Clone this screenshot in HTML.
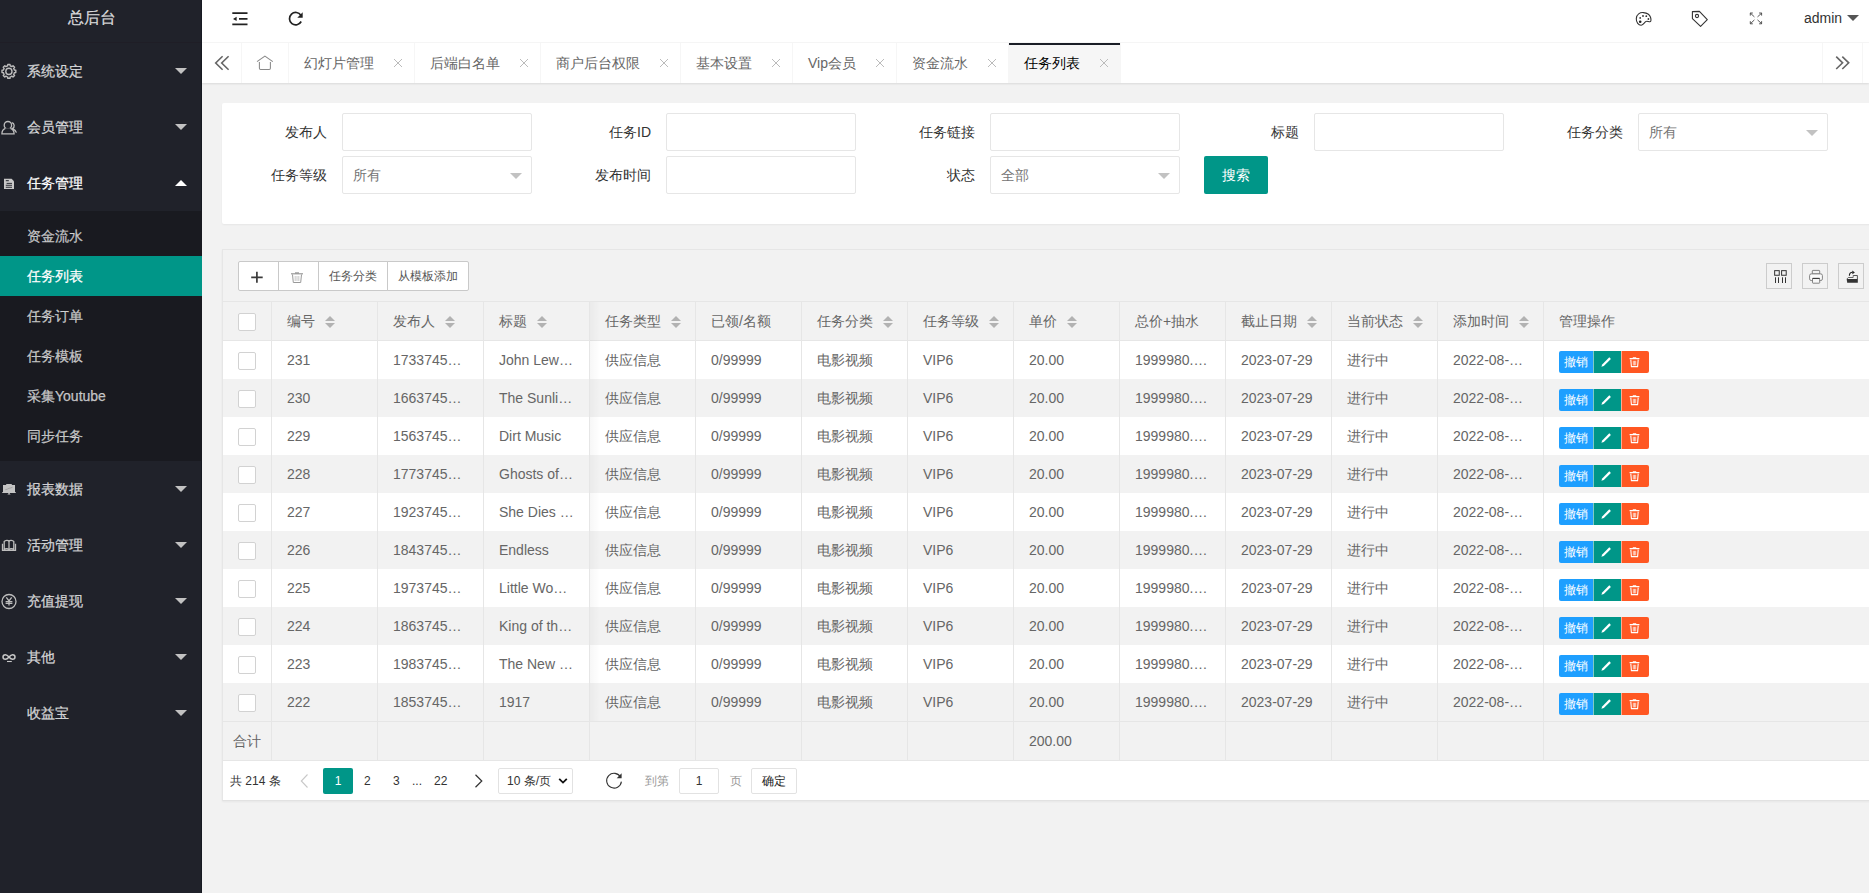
<!DOCTYPE html>
<html><head><meta charset="utf-8"><title>总后台</title>
<style>
*{margin:0;padding:0;box-sizing:border-box}
html,body{width:1869px;height:893px;overflow:hidden;background:#f2f2f2;font-family:"Liberation Sans",sans-serif;font-size:14px;color:#333}
.abs{position:absolute}
#side{position:absolute;left:0;top:0;width:202px;height:893px;background:#20222a;border-right:1px solid #171a22}
#logo{position:absolute;left:-18px;top:0;width:219px;height:43px;line-height:36px;-webkit-text-stroke:0.2px currentColor;text-align:center;color:rgba(255,255,255,.8);font-size:16px;background:#20222a;border-bottom:1px solid #1f1e26}
.nav{position:absolute;left:0;width:201px;height:56px;line-height:56px;color:rgba(255,255,255,.75);font-size:14px}
.nav .t{position:absolute;left:27px;top:0;-webkit-text-stroke:0.25px currentColor}
.nav .ic{position:absolute;left:1px;top:20px;width:16px;height:16px}
.nav .ar{position:absolute;left:175px;top:25px;width:0;height:0;border-left:6px solid transparent;border-right:6px solid transparent;border-top:6px solid #c2c2c2}
.nav .ar.up{border-top:0;border-bottom:6px solid #fff;top:25px}
#child{position:absolute;left:0;top:211px;width:202px;height:250px;background:#191a20}
.ch{position:absolute;left:0;width:202px;height:40px;line-height:40px;padding-left:27px;color:rgba(255,255,255,.7);-webkit-text-stroke:0.25px currentColor}
.ch.on{background:#009688;color:#fff}
#head{position:absolute;left:202px;top:0;width:1667px;height:43px;background:#fff;border-bottom:1px solid #f6f6f6}
#tabs{position:absolute;left:202px;top:43px;width:1667px;height:40px;background:#fff;box-shadow:0 1px 2px 0 rgba(0,0,0,.1)}
.tab{position:absolute;top:0;height:40px;line-height:40px;border-right:1px solid #f6f6f6;color:#666;padding-left:15px}
.tab .x{position:absolute;right:12px;top:16px;width:8px;height:8px;background:linear-gradient(45deg,transparent 46%,#bbb 46%,#bbb 54%,transparent 54%),linear-gradient(-45deg,transparent 46%,#bbb 46%,#bbb 54%,transparent 54%)}
.tab.on{background:#f6f6f6;color:#000}
.tab.on:before{content:"";position:absolute;left:0;top:0;width:111px;height:2px;background:#1a1d26}
.card{position:absolute;background:#fff;border-radius:2px;box-shadow:0 1px 2px 0 rgba(0,0,0,.05)}
.lbl{position:absolute;height:38px;line-height:38px;text-align:right;color:#333;width:110px;padding-right:15px}
.inp{position:absolute;width:190px;height:38px;border:1px solid #e6e6e6;border-radius:2px;background:#fff;line-height:36px;padding-left:10px;color:#757575}
.inp .ca{position:absolute;right:9px;top:16px;border-left:6px solid transparent;border-right:6px solid transparent;border-top:6px solid #c2c2c2}
.btn{position:absolute;height:38px;line-height:38px;background:#009688;color:#fff;border-radius:2px;text-align:center}
#tbox{position:absolute;left:222px;top:249px;width:1660px;height:552px;border:1px solid #e6e6e6;border-bottom-color:#e2e2e2;background:#fff;box-shadow:0 1px 2px 0 rgba(0,0,0,.05)}
#tool{position:absolute;left:223px;top:250px;width:1660px;height:52px;background:#f2f2f2;border-bottom:1px solid #e6e6e6}
.tb{position:absolute;top:261px;height:30px;line-height:28px;border:1px solid #c9c9c9;background:#fff;color:#555;font-size:12px;text-align:center}
.ti{position:absolute;top:263px;width:26px;height:26px;border:1px solid #ccc}
.thead{position:absolute;left:223px;top:302px;width:1660px;height:39px;background:#f2f2f2;border-bottom:1px solid #e6e6e6}
.tr{position:absolute;left:223px;width:1660px;height:38px;background:#fff}
.tr.even{background:#f2f2f2}
.td,.th{position:absolute;top:0;height:38px;line-height:39px;padding-left:15px;color:#666;border-right:1px solid #e6e6e6;white-space:nowrap}
.th{height:38px;line-height:39px}
.c0{left:0;width:49px;padding:0}
.c1{left:49px;width:106px}.c2{left:155px;width:106px}.c3{left:261px;width:106px}.c4{left:367px;width:106px}
.c5{left:473px;width:106px}.c6{left:579px;width:106px}.c7{left:685px;width:106px}.c8{left:791px;width:106px}
.c9{left:897px;width:106px}.c10{left:1003px;width:106px}.c11{left:1109px;width:106px}.c12{left:1215px;width:106px}
.c13{left:1321px;width:340px;border-right:0}
.cb{position:absolute;left:15px;top:11px;width:18px;height:18px;border:1px solid #d2d2d2;border-radius:2px;background:#fff}
.sort{display:inline-block;position:relative;width:10px;height:12px;vertical-align:middle;margin-left:10px;top:0px}
.sort:before{content:"";position:absolute;left:0;top:0;border-left:5px solid transparent;border-right:5px solid transparent;border-bottom:5px solid #b2b2b2}
.sort:after{content:"";position:absolute;left:0;top:7px;border-left:5px solid transparent;border-right:5px solid transparent;border-top:5px solid #b2b2b2}
.ob{position:absolute;top:10px;height:22px;line-height:22px;color:#fff;font-size:12px;text-align:center;overflow:hidden}
.ob svg{position:absolute;left:-1px;top:0}
.b1{left:15px;width:34px;background:#1e9fff;border-radius:2px 0 0 2px}
.b2{left:49px;width:28px;background:#009688;border-left:1px solid rgba(255,255,255,.5)}
.b3{left:77px;width:28px;background:#ff5722;border-radius:0 2px 2px 0;border-left:1px solid rgba(255,255,255,.5)}
#foot{position:absolute;left:223px;top:721px;width:1660px;height:40px;background:#f2f2f2;border-top:1px solid #e6e6e6;border-bottom:1px solid #e6e6e6}
#pager{position:absolute;left:223px;top:761px;width:1660px;height:39px;background:#fff}
.pg{position:absolute;top:769px;height:24px;line-height:24px;font-size:12px;color:#333}
</style></head><body>
<div id="side">
  <div id="logo">总后台</div>
  <div class="nav" style="top:43px"><span class="t">系统设定</span><i class="ar"></i></div>
  <div class="nav" style="top:99px"><span class="t">会员管理</span><i class="ar"></i></div>
  <div class="nav" style="top:155px;color:#fff"><span class="t">任务管理</span><i class="ar up"></i></div>
  <div id="child">
    <div class="ch" style="top:5px">资金流水</div>
    <div class="ch on" style="top:45px">任务列表</div>
    <div class="ch" style="top:85px">任务订单</div>
    <div class="ch" style="top:125px">任务模板</div>
    <div class="ch" style="top:165px">采集Youtube</div>
    <div class="ch" style="top:205px">同步任务</div>
  </div>
  <div class="nav" style="top:461px"><span class="t">报表数据</span><i class="ar"></i></div>
  <div class="nav" style="top:517px"><span class="t">活动管理</span><i class="ar"></i></div>
  <div class="nav" style="top:573px"><span class="t">充值提现</span><i class="ar"></i></div>
  <div class="nav" style="top:629px"><span class="t">其他</span><i class="ar"></i></div>
  <div class="nav" style="top:685px"><span class="t">收益宝</span><i class="ar"></i></div>
</div>

<div id="head">
  <span class="abs" style="left:1602px;top:0;line-height:36px;color:#333">admin</span>
</div>

<div id="tabs">
  <div class="tab" style="left:0;width:40px;padding:0"></div>
  <div class="tab" style="left:40px;width:47px;padding:0"></div>
  <div class="tab" style="left:87px;width:126px">幻灯片管理<i class="x"></i></div>
  <div class="tab" style="left:213px;width:126px">后端白名单<i class="x"></i></div>
  <div class="tab" style="left:339px;width:140px">商户后台权限<i class="x"></i></div>
  <div class="tab" style="left:479px;width:112px">基本设置<i class="x"></i></div>
  <div class="tab" style="left:591px;width:104px">Vip会员<i class="x"></i></div>
  <div class="tab" style="left:695px;width:112px">资金流水<i class="x"></i></div>
  <div class="tab on" style="left:807px;width:112px">任务列表<i class="x"></i></div>
  <div class="abs" style="left:1620px;top:0;width:1px;height:40px;background:#f6f6f6"></div>
  <div class="abs" style="left:1660px;top:0;width:1px;height:40px;background:#f6f6f6"></div>
</div>

<div class="card" style="left:222px;top:103px;width:1660px;height:121px">
</div>
<div class="lbl" style="left:232px;top:113px">发布人</div><div class="inp" style="left:342px;top:113px"></div>
<div class="lbl" style="left:556px;top:113px">任务ID</div><div class="inp" style="left:666px;top:113px"></div>
<div class="lbl" style="left:880px;top:113px">任务链接</div><div class="inp" style="left:990px;top:113px"></div>
<div class="lbl" style="left:1204px;top:113px">标题</div><div class="inp" style="left:1314px;top:113px"></div>
<div class="lbl" style="left:1528px;top:113px">任务分类</div><div class="inp" style="left:1638px;top:113px">所有<i class="ca"></i></div>
<div class="lbl" style="left:232px;top:156px">任务等级</div><div class="inp" style="left:342px;top:156px">所有<i class="ca"></i></div>
<div class="lbl" style="left:556px;top:156px">发布时间</div><div class="inp" style="left:666px;top:156px"></div>
<div class="lbl" style="left:880px;top:156px">状态</div><div class="inp" style="left:990px;top:156px">全部<i class="ca"></i></div>
<div class="btn" style="left:1204px;top:156px;width:64px">搜索</div>

<div id="tbox"></div>
<div id="tool"></div>
<div class="tb" style="left:238px;width:41px;border-radius:2px 0 0 2px"></div>
<div class="tb" style="left:278px;width:41px"></div>
<div class="tb" style="left:318px;width:70px">任务分类</div>
<div class="tb" style="left:387px;width:82px;border-radius:0 2px 2px 0">从模板添加</div>
<div class="ti" style="left:1766px"></div>
<div class="ti" style="left:1802px"></div>
<div class="ti" style="left:1838px"></div>

<div class="thead">
<div class="th c0"><i class="cb"></i></div>
<div class="th c1">编号<i class="sort"></i></div><div class="th c2">发布人<i class="sort"></i></div><div class="th c3">标题<i class="sort"></i></div>
<div class="th c4">任务类型<i class="sort"></i></div><div class="th c5">已领/名额</div><div class="th c6">任务分类<i class="sort"></i></div>
<div class="th c7">任务等级<i class="sort"></i></div><div class="th c8">单价<i class="sort"></i></div><div class="th c9">总价+抽水</div>
<div class="th c10">截止日期<i class="sort"></i></div><div class="th c11">当前状态<i class="sort"></i></div><div class="th c12">添加时间<i class="sort"></i></div>
<div class="th c13">管理操作</div>
</div>
<div class="tr " style="top:341px">
<div class="td c0"><i class="cb"></i></div>
<div class="td c1">231</div><div class="td c2">1733745…</div><div class="td c3">John Lew…</div>
<div class="td c4">供应信息</div><div class="td c5">0/99999</div><div class="td c6">电影视频</div>
<div class="td c7">VIP6</div><div class="td c8">20.00</div><div class="td c9">1999980.…</div>
<div class="td c10">2023-07-29</div><div class="td c11">进行中</div><div class="td c12">2022-08-…</div>
<div class="td c13"><span class="ob b1">撤销</span><span class="ob b2"><svg width="28" height="22" viewBox="0 0 28 22"><path d="M9.2 13.4 L16.3 6.3 L17.9 7.9 L10.8 15 L8.4 15.8 Z" fill="#fff"/></svg></span><span class="ob b3"><svg width="28" height="22" viewBox="0 0 28 22"><path d="M8.6 7.6 L18.4 7.6" stroke="#fff" stroke-width="1.3"/><path d="M11.8 7 L15.2 7" stroke="#fff" stroke-width="1.6"/><path d="M9.8 8.6 L10.4 15.6 L16.6 15.6 L17.2 8.6" stroke="#fff" stroke-width="1.1" fill="none"/><path d="M12.3 9.8 L12.3 14.4 M13.5 9.8 L13.5 14.4 M14.7 9.8 L14.7 14.4" stroke="#fff" stroke-width="0.7"/></svg></span></div>
</div>
<div class="tr even" style="top:379px">
<div class="td c0"><i class="cb"></i></div>
<div class="td c1">230</div><div class="td c2">1663745…</div><div class="td c3">The Sunli…</div>
<div class="td c4">供应信息</div><div class="td c5">0/99999</div><div class="td c6">电影视频</div>
<div class="td c7">VIP6</div><div class="td c8">20.00</div><div class="td c9">1999980.…</div>
<div class="td c10">2023-07-29</div><div class="td c11">进行中</div><div class="td c12">2022-08-…</div>
<div class="td c13"><span class="ob b1">撤销</span><span class="ob b2"><svg width="28" height="22" viewBox="0 0 28 22"><path d="M9.2 13.4 L16.3 6.3 L17.9 7.9 L10.8 15 L8.4 15.8 Z" fill="#fff"/></svg></span><span class="ob b3"><svg width="28" height="22" viewBox="0 0 28 22"><path d="M8.6 7.6 L18.4 7.6" stroke="#fff" stroke-width="1.3"/><path d="M11.8 7 L15.2 7" stroke="#fff" stroke-width="1.6"/><path d="M9.8 8.6 L10.4 15.6 L16.6 15.6 L17.2 8.6" stroke="#fff" stroke-width="1.1" fill="none"/><path d="M12.3 9.8 L12.3 14.4 M13.5 9.8 L13.5 14.4 M14.7 9.8 L14.7 14.4" stroke="#fff" stroke-width="0.7"/></svg></span></div>
</div>
<div class="tr " style="top:417px">
<div class="td c0"><i class="cb"></i></div>
<div class="td c1">229</div><div class="td c2">1563745…</div><div class="td c3">Dirt Music</div>
<div class="td c4">供应信息</div><div class="td c5">0/99999</div><div class="td c6">电影视频</div>
<div class="td c7">VIP6</div><div class="td c8">20.00</div><div class="td c9">1999980.…</div>
<div class="td c10">2023-07-29</div><div class="td c11">进行中</div><div class="td c12">2022-08-…</div>
<div class="td c13"><span class="ob b1">撤销</span><span class="ob b2"><svg width="28" height="22" viewBox="0 0 28 22"><path d="M9.2 13.4 L16.3 6.3 L17.9 7.9 L10.8 15 L8.4 15.8 Z" fill="#fff"/></svg></span><span class="ob b3"><svg width="28" height="22" viewBox="0 0 28 22"><path d="M8.6 7.6 L18.4 7.6" stroke="#fff" stroke-width="1.3"/><path d="M11.8 7 L15.2 7" stroke="#fff" stroke-width="1.6"/><path d="M9.8 8.6 L10.4 15.6 L16.6 15.6 L17.2 8.6" stroke="#fff" stroke-width="1.1" fill="none"/><path d="M12.3 9.8 L12.3 14.4 M13.5 9.8 L13.5 14.4 M14.7 9.8 L14.7 14.4" stroke="#fff" stroke-width="0.7"/></svg></span></div>
</div>
<div class="tr even" style="top:455px">
<div class="td c0"><i class="cb"></i></div>
<div class="td c1">228</div><div class="td c2">1773745…</div><div class="td c3">Ghosts of…</div>
<div class="td c4">供应信息</div><div class="td c5">0/99999</div><div class="td c6">电影视频</div>
<div class="td c7">VIP6</div><div class="td c8">20.00</div><div class="td c9">1999980.…</div>
<div class="td c10">2023-07-29</div><div class="td c11">进行中</div><div class="td c12">2022-08-…</div>
<div class="td c13"><span class="ob b1">撤销</span><span class="ob b2"><svg width="28" height="22" viewBox="0 0 28 22"><path d="M9.2 13.4 L16.3 6.3 L17.9 7.9 L10.8 15 L8.4 15.8 Z" fill="#fff"/></svg></span><span class="ob b3"><svg width="28" height="22" viewBox="0 0 28 22"><path d="M8.6 7.6 L18.4 7.6" stroke="#fff" stroke-width="1.3"/><path d="M11.8 7 L15.2 7" stroke="#fff" stroke-width="1.6"/><path d="M9.8 8.6 L10.4 15.6 L16.6 15.6 L17.2 8.6" stroke="#fff" stroke-width="1.1" fill="none"/><path d="M12.3 9.8 L12.3 14.4 M13.5 9.8 L13.5 14.4 M14.7 9.8 L14.7 14.4" stroke="#fff" stroke-width="0.7"/></svg></span></div>
</div>
<div class="tr " style="top:493px">
<div class="td c0"><i class="cb"></i></div>
<div class="td c1">227</div><div class="td c2">1923745…</div><div class="td c3">She Dies …</div>
<div class="td c4">供应信息</div><div class="td c5">0/99999</div><div class="td c6">电影视频</div>
<div class="td c7">VIP6</div><div class="td c8">20.00</div><div class="td c9">1999980.…</div>
<div class="td c10">2023-07-29</div><div class="td c11">进行中</div><div class="td c12">2022-08-…</div>
<div class="td c13"><span class="ob b1">撤销</span><span class="ob b2"><svg width="28" height="22" viewBox="0 0 28 22"><path d="M9.2 13.4 L16.3 6.3 L17.9 7.9 L10.8 15 L8.4 15.8 Z" fill="#fff"/></svg></span><span class="ob b3"><svg width="28" height="22" viewBox="0 0 28 22"><path d="M8.6 7.6 L18.4 7.6" stroke="#fff" stroke-width="1.3"/><path d="M11.8 7 L15.2 7" stroke="#fff" stroke-width="1.6"/><path d="M9.8 8.6 L10.4 15.6 L16.6 15.6 L17.2 8.6" stroke="#fff" stroke-width="1.1" fill="none"/><path d="M12.3 9.8 L12.3 14.4 M13.5 9.8 L13.5 14.4 M14.7 9.8 L14.7 14.4" stroke="#fff" stroke-width="0.7"/></svg></span></div>
</div>
<div class="tr even" style="top:531px">
<div class="td c0"><i class="cb"></i></div>
<div class="td c1">226</div><div class="td c2">1843745…</div><div class="td c3">Endless</div>
<div class="td c4">供应信息</div><div class="td c5">0/99999</div><div class="td c6">电影视频</div>
<div class="td c7">VIP6</div><div class="td c8">20.00</div><div class="td c9">1999980.…</div>
<div class="td c10">2023-07-29</div><div class="td c11">进行中</div><div class="td c12">2022-08-…</div>
<div class="td c13"><span class="ob b1">撤销</span><span class="ob b2"><svg width="28" height="22" viewBox="0 0 28 22"><path d="M9.2 13.4 L16.3 6.3 L17.9 7.9 L10.8 15 L8.4 15.8 Z" fill="#fff"/></svg></span><span class="ob b3"><svg width="28" height="22" viewBox="0 0 28 22"><path d="M8.6 7.6 L18.4 7.6" stroke="#fff" stroke-width="1.3"/><path d="M11.8 7 L15.2 7" stroke="#fff" stroke-width="1.6"/><path d="M9.8 8.6 L10.4 15.6 L16.6 15.6 L17.2 8.6" stroke="#fff" stroke-width="1.1" fill="none"/><path d="M12.3 9.8 L12.3 14.4 M13.5 9.8 L13.5 14.4 M14.7 9.8 L14.7 14.4" stroke="#fff" stroke-width="0.7"/></svg></span></div>
</div>
<div class="tr " style="top:569px">
<div class="td c0"><i class="cb"></i></div>
<div class="td c1">225</div><div class="td c2">1973745…</div><div class="td c3">Little Wo…</div>
<div class="td c4">供应信息</div><div class="td c5">0/99999</div><div class="td c6">电影视频</div>
<div class="td c7">VIP6</div><div class="td c8">20.00</div><div class="td c9">1999980.…</div>
<div class="td c10">2023-07-29</div><div class="td c11">进行中</div><div class="td c12">2022-08-…</div>
<div class="td c13"><span class="ob b1">撤销</span><span class="ob b2"><svg width="28" height="22" viewBox="0 0 28 22"><path d="M9.2 13.4 L16.3 6.3 L17.9 7.9 L10.8 15 L8.4 15.8 Z" fill="#fff"/></svg></span><span class="ob b3"><svg width="28" height="22" viewBox="0 0 28 22"><path d="M8.6 7.6 L18.4 7.6" stroke="#fff" stroke-width="1.3"/><path d="M11.8 7 L15.2 7" stroke="#fff" stroke-width="1.6"/><path d="M9.8 8.6 L10.4 15.6 L16.6 15.6 L17.2 8.6" stroke="#fff" stroke-width="1.1" fill="none"/><path d="M12.3 9.8 L12.3 14.4 M13.5 9.8 L13.5 14.4 M14.7 9.8 L14.7 14.4" stroke="#fff" stroke-width="0.7"/></svg></span></div>
</div>
<div class="tr even" style="top:607px">
<div class="td c0"><i class="cb"></i></div>
<div class="td c1">224</div><div class="td c2">1863745…</div><div class="td c3">King of th…</div>
<div class="td c4">供应信息</div><div class="td c5">0/99999</div><div class="td c6">电影视频</div>
<div class="td c7">VIP6</div><div class="td c8">20.00</div><div class="td c9">1999980.…</div>
<div class="td c10">2023-07-29</div><div class="td c11">进行中</div><div class="td c12">2022-08-…</div>
<div class="td c13"><span class="ob b1">撤销</span><span class="ob b2"><svg width="28" height="22" viewBox="0 0 28 22"><path d="M9.2 13.4 L16.3 6.3 L17.9 7.9 L10.8 15 L8.4 15.8 Z" fill="#fff"/></svg></span><span class="ob b3"><svg width="28" height="22" viewBox="0 0 28 22"><path d="M8.6 7.6 L18.4 7.6" stroke="#fff" stroke-width="1.3"/><path d="M11.8 7 L15.2 7" stroke="#fff" stroke-width="1.6"/><path d="M9.8 8.6 L10.4 15.6 L16.6 15.6 L17.2 8.6" stroke="#fff" stroke-width="1.1" fill="none"/><path d="M12.3 9.8 L12.3 14.4 M13.5 9.8 L13.5 14.4 M14.7 9.8 L14.7 14.4" stroke="#fff" stroke-width="0.7"/></svg></span></div>
</div>
<div class="tr " style="top:645px">
<div class="td c0"><i class="cb"></i></div>
<div class="td c1">223</div><div class="td c2">1983745…</div><div class="td c3">The New …</div>
<div class="td c4">供应信息</div><div class="td c5">0/99999</div><div class="td c6">电影视频</div>
<div class="td c7">VIP6</div><div class="td c8">20.00</div><div class="td c9">1999980.…</div>
<div class="td c10">2023-07-29</div><div class="td c11">进行中</div><div class="td c12">2022-08-…</div>
<div class="td c13"><span class="ob b1">撤销</span><span class="ob b2"><svg width="28" height="22" viewBox="0 0 28 22"><path d="M9.2 13.4 L16.3 6.3 L17.9 7.9 L10.8 15 L8.4 15.8 Z" fill="#fff"/></svg></span><span class="ob b3"><svg width="28" height="22" viewBox="0 0 28 22"><path d="M8.6 7.6 L18.4 7.6" stroke="#fff" stroke-width="1.3"/><path d="M11.8 7 L15.2 7" stroke="#fff" stroke-width="1.6"/><path d="M9.8 8.6 L10.4 15.6 L16.6 15.6 L17.2 8.6" stroke="#fff" stroke-width="1.1" fill="none"/><path d="M12.3 9.8 L12.3 14.4 M13.5 9.8 L13.5 14.4 M14.7 9.8 L14.7 14.4" stroke="#fff" stroke-width="0.7"/></svg></span></div>
</div>
<div class="tr even" style="top:683px">
<div class="td c0"><i class="cb"></i></div>
<div class="td c1">222</div><div class="td c2">1853745…</div><div class="td c3">1917</div>
<div class="td c4">供应信息</div><div class="td c5">0/99999</div><div class="td c6">电影视频</div>
<div class="td c7">VIP6</div><div class="td c8">20.00</div><div class="td c9">1999980.…</div>
<div class="td c10">2023-07-29</div><div class="td c11">进行中</div><div class="td c12">2022-08-…</div>
<div class="td c13"><span class="ob b1">撤销</span><span class="ob b2"><svg width="28" height="22" viewBox="0 0 28 22"><path d="M9.2 13.4 L16.3 6.3 L17.9 7.9 L10.8 15 L8.4 15.8 Z" fill="#fff"/></svg></span><span class="ob b3"><svg width="28" height="22" viewBox="0 0 28 22"><path d="M8.6 7.6 L18.4 7.6" stroke="#fff" stroke-width="1.3"/><path d="M11.8 7 L15.2 7" stroke="#fff" stroke-width="1.6"/><path d="M9.8 8.6 L10.4 15.6 L16.6 15.6 L17.2 8.6" stroke="#fff" stroke-width="1.1" fill="none"/><path d="M12.3 9.8 L12.3 14.4 M13.5 9.8 L13.5 14.4 M14.7 9.8 L14.7 14.4" stroke="#fff" stroke-width="0.7"/></svg></span></div>
</div>
<div class="abs" style="left:590px;top:302px;width:10px;height:419px;background:linear-gradient(90deg,rgba(0,0,0,.03),rgba(0,0,0,0))"></div>
<div id="foot">
<div class="td c0" style="padding-left:10px;height:38px;line-height:38px">合计</div>
<div class="td c1"></div><div class="td c2"></div><div class="td c3"></div>
<div class="td c4"></div><div class="td c5"></div><div class="td c6"></div>
<div class="td c7"></div><div class="td c8" style="line-height:38px">200.00</div><div class="td c9"></div>
<div class="td c10"></div><div class="td c11"></div><div class="td c12"></div>
</div>
<div id="pager"></div>
<div class="pg" style="left:230px">共 214 条</div>
<svg class="abs" style="left:298px;top:772px" width="12" height="18" viewBox="0 0 12 18"><path d="M9.5 2.5 L3.3 9 L9.5 15.5" stroke="#c8c8c8" stroke-width="1.1" fill="none"/></svg>
<div class="pg" style="left:323px;top:768px;height:26px;line-height:26px;width:30px;background:#009688;color:#fff;text-align:center;border-radius:2px">1</div>
<div class="pg" style="left:364px">2</div>
<div class="pg" style="left:393px">3</div>
<div class="pg" style="left:412px">...</div>
<div class="pg" style="left:434px">22</div>
<svg class="abs" style="left:473px;top:772px" width="12" height="18" viewBox="0 0 12 18"><path d="M2.5 2.8 L8.8 9 L2.5 15.2" stroke="#333" stroke-width="1.2" fill="none"/></svg>
<div class="pg" style="left:498px;top:768px;height:26px;line-height:24px;width:75px;border:1px solid #e2e2e2;border-radius:2px;padding-left:8px">10 条/页</div>
<svg class="abs" style="left:556px;top:774px" width="14" height="14" viewBox="0 0 14 14"><path d="M3.2 4.8 L7 8.6 L10.8 4.8" stroke="#111" stroke-width="1.8" fill="none"/></svg>
<svg class="abs" style="left:603px;top:770px" width="22" height="22" viewBox="0 0 22 22"><path d="M17.6 7.2 A7.4 7.4 0 1 0 18.4 11.6" stroke="#333" stroke-width="1.1" fill="none"/><path d="M18.6 3.2 L18.6 8.3 L13.7 8.3 Z" fill="#333"/></svg>
<div class="pg" style="left:645px;color:#999">到第</div>
<div class="pg" style="left:679px;top:768px;height:26px;line-height:24px;width:40px;border:1px solid #e2e2e2;border-radius:2px;text-align:center">1</div>
<div class="pg" style="left:730px;color:#999">页</div>
<div class="pg" style="left:751px;top:768px;height:26px;line-height:24px;width:46px;border:1px solid #e2e2e2;border-radius:2px;text-align:center;color:#222">确定</div>

<!-- sidebar icons -->
<svg class="abs" style="left:0;top:60px" width="24" height="24" viewBox="0 0 24 24" fill="none" stroke="#bdbdbd" stroke-width="1.4" stroke-linejoin="round">
<path d="M6.76 6.23 L7.59 5.95 L7.80 4.49 L10.00 4.49 L10.21 5.95 L11.04 6.23 L11.83 6.63 L13.01 5.74 L14.56 7.29 L13.67 8.47 L14.07 9.26 L14.35 10.09 L15.81 10.30 L15.81 12.50 L14.35 12.71 L14.07 13.54 L13.67 14.33 L14.56 15.51 L13.01 17.06 L11.83 16.17 L11.04 16.57 L10.21 16.85 L10.00 18.31 L7.80 18.31 L7.59 16.85 L6.76 16.57 L5.97 16.17 L4.79 17.06 L3.24 15.51 L4.13 14.33 L3.73 13.54 L3.45 12.71 L1.99 12.50 L1.99 10.30 L3.45 10.09 L3.73 9.26 L4.13 8.47 L3.24 7.29 L4.79 5.74 L5.97 6.63 Z"/>
<circle cx="8.9" cy="11.4" r="3.1"/>
</svg>
<svg class="abs" style="left:0;top:116px" width="24" height="24" viewBox="0 0 24 24" fill="none" stroke="#bdbdbd" stroke-width="1.3">
<path d="M11.8 6.6 C14.6 7.3 15 11 12.6 12.6 C14.6 13.6 16 14.6 16.4 16.6"/>
<circle cx="7.9" cy="9.2" r="3.7" fill="#20222a"/>
<path d="M5.4 12.3 C3 13.2 1.9 15.2 1.9 17.9 L14.1 17.9 C14.1 15.2 13 13.2 10.4 12.3" fill="#20222a"/>
</svg>
<svg class="abs" style="left:0;top:172px" width="24" height="24" viewBox="0 0 24 24">
<path d="M4 6.8 L11.6 6.8 L14 9.2 L14 17.1 L4 17.1 Z" fill="#c8c8c8"/>
<rect x="5.8" y="8.2" width="3" height="1" fill="#20222a"/>
<rect x="6.6" y="10.9" width="5.4" height="0.9" fill="#20222a"/>
<rect x="5.8" y="12.8" width="6.2" height="0.9" fill="#20222a"/>
<rect x="5.8" y="14.8" width="6.2" height="0.9" fill="#20222a"/>
</svg>
<svg class="abs" style="left:0;top:477px" width="24" height="24" viewBox="0 0 24 24">
<path d="M6.2 7 L11.8 7 L11.8 7.9 L15 7.9 L15 15.3 L16 15.3 L16 16 L2 16 L2 15.3 L3 15.3 L3 7.9 L6.2 7.9 Z" fill="#c4c4c4"/>
<path d="M5.3 12.7 L7.3 12.2 L9 11.3 L11 10.9 L12.6 10.1" stroke="#9a9a9a" stroke-width="0.8" fill="none"/>
<path d="M8.3 16 L9.8 16 L9.8 17 L11 17.4 L7 17.4 L8.3 17 Z" fill="#c4c4c4"/>
</svg>
<svg class="abs" style="left:0;top:533px" width="24" height="24" viewBox="0 0 24 24" fill="none" stroke="#bdbdbd" stroke-width="1.3">
<path d="M9 8 C8 7 5.5 7 4.2 8.5 L4.2 16.4 C5.5 15.5 8 15.5 9 16.6 C10 15.5 12.5 15.5 13.8 16.4 L13.8 8.5 C12.5 7 10 7 9 8 Z"/>
<path d="M9 8 L9 16.6"/>
<path d="M2.5 10.8 L2.5 17.4 L15.5 17.4 L15.5 10.8"/>
</svg>
<svg class="abs" style="left:0;top:589px" width="24" height="24" viewBox="0 0 24 24" fill="none" stroke="#bdbdbd" stroke-width="1.3">
<circle cx="9" cy="12.5" r="7"/>
<path d="M6.3 8.4 L9 12 L11.7 8.4 M9 12 L9 16.6 M5.6 12.6 L12.4 12.6 M5.6 14.3 L12.4 14.3"/>
</svg>
<svg class="abs" style="left:0;top:645px" width="24" height="24" viewBox="0 0 24 24" fill="none" stroke="#c8c8c8" stroke-width="1.5">
<path d="M9 12 C7.5 10.2 6.5 9.7 5.4 9.7 C4 9.7 3 10.7 3 12 C3 13.3 4 14.3 5.4 14.3 C6.5 14.3 7.5 13.8 9 12 C10.5 10.2 11.5 9.7 12.6 9.7 C14 9.7 15 10.7 15 12 C15 13.3 14 14.3 12.6 14.3 C11.5 14.3 10.5 13.8 9 12 Z"/>
<path d="M7 16.5 L11.8 16.5" stroke-width="1.1"/>
</svg>

<!-- header icons -->
<svg class="abs" style="left:228px;top:6px" width="24" height="24" viewBox="0 0 24 24">
<path d="M4.3 7.1 L19.5 7.1 M11 12.9 L19.5 12.9 M4.3 18.4 L19.5 18.4" stroke="#222" stroke-width="1.8"/>
<path d="M5 12.9 L8.6 10.8 L8.6 15 Z" fill="#222"/>
</svg>
<svg class="abs" style="left:284px;top:6px" width="24" height="24" viewBox="0 0 24 24">
<path d="M16.9 9.3 A6.2 6.2 0 1 0 17.2 15.5" stroke="#222" stroke-width="1.7" fill="none"/>
<path d="M18.7 6.2 L18.7 11.7 L13.3 11.7 Z" fill="#222"/>
</svg>
<svg class="abs" style="left:1631px;top:6px" width="24" height="24" viewBox="0 0 24 24" fill="none" stroke="#333" stroke-width="1.1">
<path d="M12.4 6.6 C9 6.3 5.5 8.3 5.3 12.6 C5.1 16.6 7.6 19.3 10.2 19.2 C12.3 19 13.2 16.9 14.6 15.6 C15.9 14.7 17.3 15.8 19 15.7 C20.2 15.6 20.2 13.3 19.5 11.3 C18.6 8.6 15.8 6.9 12.4 6.6 Z"/>
<circle cx="9.2" cy="11.9" r="0.9" fill="#333" stroke="none"/>
<circle cx="12" cy="10" r="0.9" fill="#333" stroke="none"/>
<circle cx="15.3" cy="10.2" r="0.9" fill="#333" stroke="none"/>
<circle cx="17.4" cy="13" r="0.9" fill="#333" stroke="none"/>
<circle cx="9.2" cy="15.8" r="1.3" fill="#222" stroke="none"/>
</svg>
<svg class="abs" style="left:1687px;top:6px" width="24" height="24" viewBox="0 0 24 24" fill="none" stroke="#333" stroke-width="1.1" stroke-linejoin="round">
<path d="M5.4 5.6 L12.4 5.4 L20.3 13.7 L13.6 20.4 L5.4 12.6 Z"/>
<circle cx="10" cy="10" r="1.6"/>
</svg>
<svg class="abs" style="left:1743px;top:6px" width="24" height="24" viewBox="0 0 24 24" fill="none" stroke="#444" stroke-width="0.9">
<path d="M7.4 7.1 L11.4 10.9 M7.3 7 L7.3 9.6 M7.3 7 L9.8 7"/>
<path d="M18.7 7.1 L14.5 10.9 M18.6 7 L18.6 9.6 M18.6 7 L16.1 7"/>
<path d="M7.4 17.7 L11.4 13.9 M7.3 17.8 L7.3 15.2 M7.3 17.8 L9.8 17.8"/>
<path d="M18.7 17.7 L14.5 13.9 M18.6 17.8 L18.6 15.2 M18.6 17.8 L16.1 17.8"/>
</svg>
<i class="abs" style="left:1847px;top:15px;width:0;height:0;border-left:6px solid transparent;border-right:6px solid transparent;border-top:6px solid #555"></i>

<!-- tab icons -->
<svg class="abs" style="left:208px;top:50px" width="30" height="26" viewBox="0 0 30 26" fill="none" stroke="#666" stroke-width="1.6">
<path d="M14.6 6.3 L7.7 13 L14.6 19.7 M20.6 6.3 L13.7 13 L20.6 19.7"/>
</svg>
<svg class="abs" style="left:250px;top:50px" width="30" height="26" viewBox="0 0 30 26" fill="none" stroke="#8a8a8a" stroke-width="1.05">
<path d="M7 11.6 L14.9 6.1 L22.8 11.6"/>
<path d="M9.4 12 L9.4 18.3 Q9.4 19.5 10.6 19.5 L19.2 19.5 Q20.4 19.5 20.4 18.3 L20.4 12"/>
</svg>
<svg class="abs" style="left:1826px;top:50px" width="32" height="26" viewBox="0 0 32 26" fill="none" stroke="#666" stroke-width="1.6">
<path d="M10.2 6.7 L16.6 12.8 L10.2 19 M16.3 6.7 L22.7 12.8 L16.3 19"/>
</svg>

<!-- toolbar icons -->
<svg class="abs" style="left:236px;top:258px" width="84" height="36" viewBox="0 0 84 36">
<path d="M15.2 19.3 L26.7 19.3 M20.9 13.8 L20.9 24.8" stroke="#3a3a3a" stroke-width="1.7"/>
<path d="M55 15.8 L67 15.8" stroke="#999" stroke-width="1.2"/>
<path d="M59 15 L63 15" stroke="#999" stroke-width="1.4"/>
<path d="M56.5 16.5 L57.3 24.5 L64.7 24.5 L65.5 16.5" stroke="#999" stroke-width="1" fill="none"/>
<path d="M59.2 18 L59.2 23 M61 18 L61 23 M62.8 18 L62.8 23" stroke="#bbb" stroke-width="0.8"/>
</svg>
<svg class="abs" style="left:1766px;top:263px" width="26" height="26" viewBox="0 0 26 26">
<rect x="8.65" y="7.65" width="4.6" height="4.6" fill="none" stroke="#333" stroke-width="1"/>
<rect x="15.6" y="7.65" width="4.6" height="4.6" fill="none" stroke="#333" stroke-width="1"/>
<path d="M9.5 14.3 L9.5 20 M12.5 14.3 L12.5 20 M16.5 14.3 L16.5 20 M19.5 14.3 L19.5 20" stroke="#333" stroke-width="1"/>
</svg>
<svg class="abs" style="left:1802px;top:263px" width="26" height="26" viewBox="0 0 26 26" fill="none">
<rect x="10.3" y="7.4" width="7.4" height="3.6" rx="0.6" stroke="#777" stroke-width="0.9"/>
<rect x="7.6" y="10.9" width="12.8" height="6.6" rx="1.6" stroke="#777" stroke-width="0.9" fill="#fbfbfb"/>
<rect x="10.5" y="15.4" width="7.2" height="4.8" rx="0.5" stroke="#777" stroke-width="0.9" fill="#f7f7f7"/>
<path d="M10.5 15.4 L17.7 15.4" stroke="#333" stroke-width="1"/>
</svg>
<svg class="abs" style="left:1838px;top:263px" width="26" height="26" viewBox="0 0 26 26">
<path d="M8.7 15.9 L19.8 15.9 L19.8 19.8 L9.2 19.8 Z" fill="#333"/>
<path d="M15.2 12.5 L19.4 12.5 L19.4 16" stroke="#444" stroke-width="0.9" fill="none"/>
<path d="M8.9 16 L10.3 14.5 L15.1 14.5" stroke="#555" stroke-width="0.9" fill="none"/>
<path d="M15.2 12.4 L15.2 14.6" stroke="#555" stroke-width="0.8"/>
<path d="M11.4 12.8 C11.3 10.4 12.5 9.3 14.6 9.3" stroke="#222" stroke-width="1.1" fill="none"/>
<path d="M14.3 7.4 L16.9 9.4 L14.3 11.3 Z" fill="#222"/>
</svg>

<!-- pager icons -->
</body></html>
